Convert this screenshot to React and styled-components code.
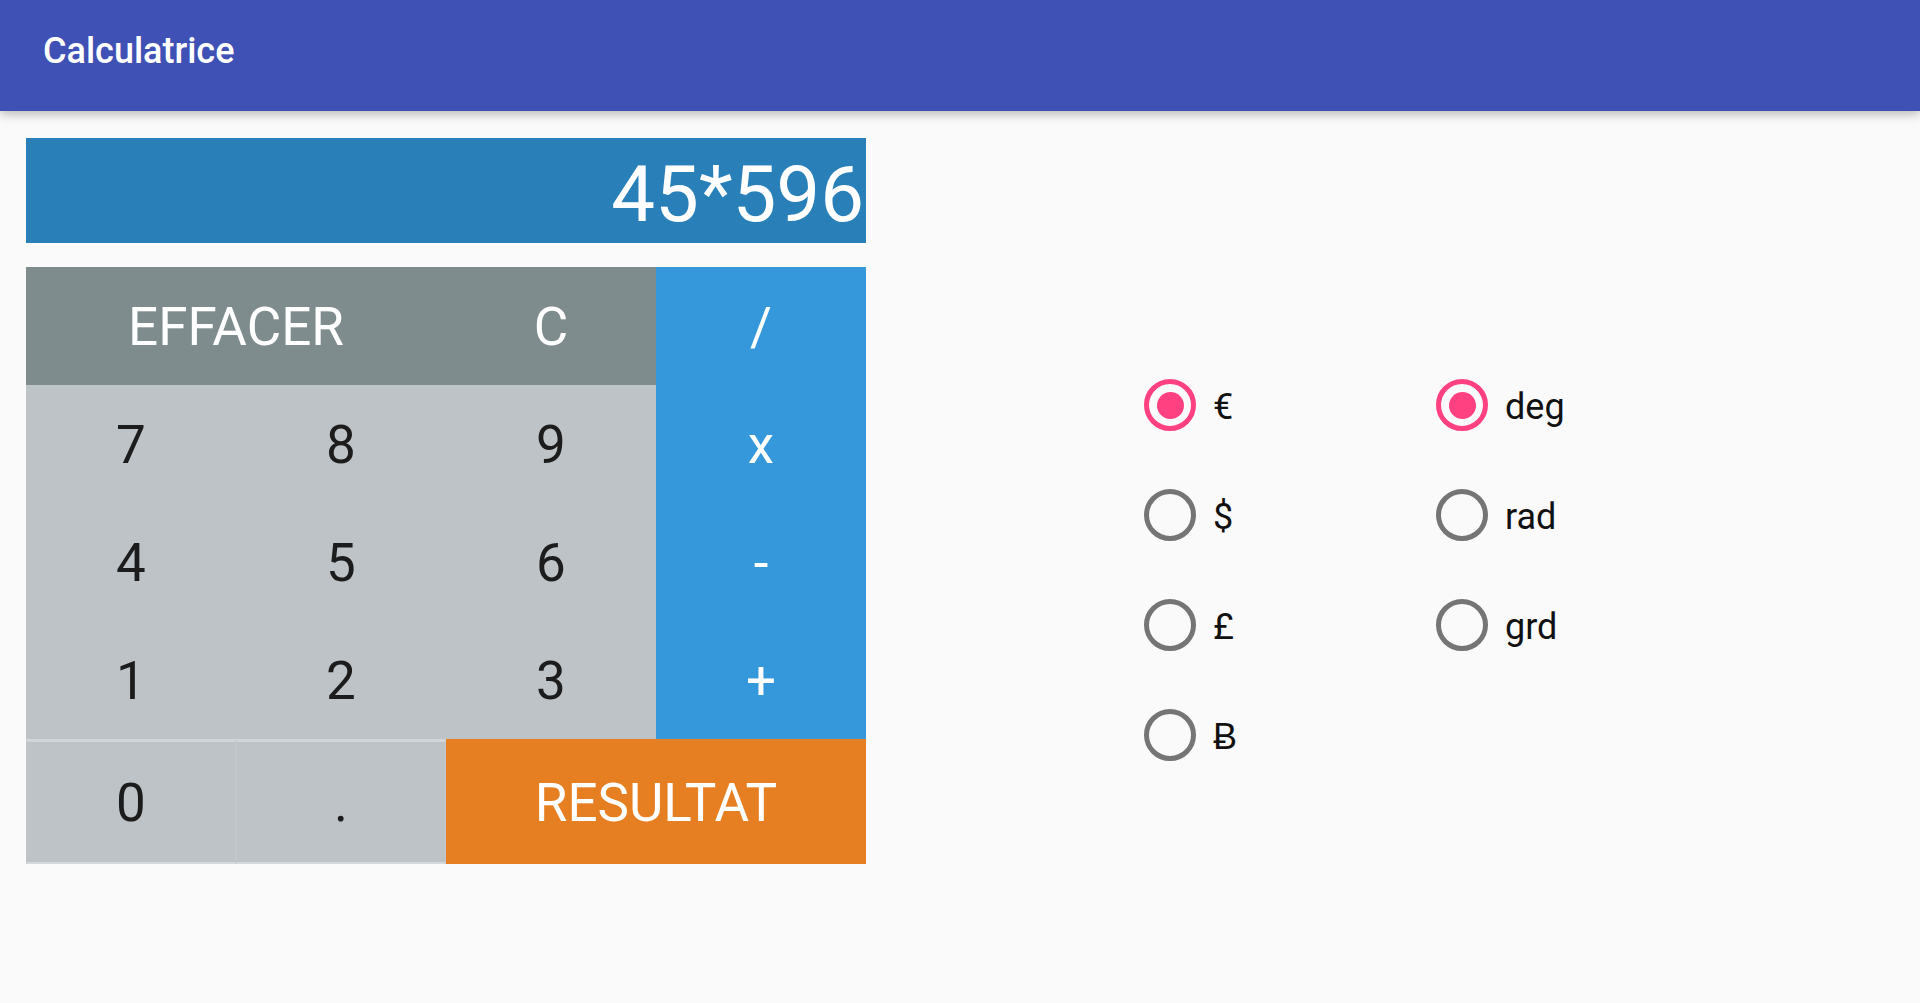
import React from 'react'
import styled, { createGlobalStyle } from 'styled-components'

const GlobalStyle = createGlobalStyle`
  html, body {
    margin: 0;
    padding: 0;
    background: #fafafa;
    font-family: Roboto, 'Liberation Sans', sans-serif;
  }
  * {
    box-sizing: border-box;
  }
`

const Page = styled.div`
  min-height: 1003px;
  background: #fafafa;
`

const AppBar = styled.header`
  position: relative;
  z-index: 2;
  height: 111px;
  background: #3f51b5;
  padding: 33px 0 0 43px;
  box-shadow: 0 3px 10px rgba(0, 0, 0, 0.28);
`

const Title = styled.h1`
  margin: 0;
  font-size: 36px;
  line-height: 1;
  font-weight: 500;
  color: #fff;
`

const Main = styled.main`
  display: flex;
`

const CalcColumn = styled.section`
  width: 840px;
  margin-left: 26px;
  padding-top: 27px;
  display: flex;
  flex-direction: column;
  gap: 24px;
`

const Display = styled.div`
  height: 105px;
  background: #2980b9;
  color: #fff;
  font-size: 78px;
  line-height: 1;
  text-align: right;
  padding: 18px 2px 0 0;
`

const Keypad = styled.div`
  display: grid;
  grid-template-columns: repeat(4, 210px);
  grid-template-rows: repeat(4, 118px) 125px;
`

const tones = {
  dark: { bg: '#7f8c8d', fg: '#fff' },
  light: { bg: '#bdc3c7', fg: '#1c1c1c' },
  op: { bg: '#3498db', fg: '#fff' },
  result: { bg: '#e67e22', fg: '#fff' },
}

const Key = styled.button`
  grid-column: span ${(p) => p.$span || 1};
  border: 0;
  margin: 0;
  padding: 2px 0 0;
  font-family: inherit;
  font-size: 53px;
  font-weight: 400;
  background: ${(p) => tones[p.$tone].bg};
  color: ${(p) => tones[p.$tone].fg};
  display: flex;
  align-items: center;
  justify-content: center;
  cursor: pointer;

  ${(p) =>
    p.$raised &&
    `
    border-top: 3px solid #d2d6d8;
    border-bottom: 2px solid #d6d9db;
    border-left: 1px solid #c2c7ca;
    border-right: 1px solid #c2c7ca;
  `}
`

const RadioPanel = styled.section`
  display: flex;
  padding: 239px 0 0 278px;
`

const RadioGroup = styled.div`
  width: 292px;
  display: flex;
  flex-direction: column;
`

const RadioRow = styled.label`
  height: 110px;
  display: flex;
  align-items: center;
  gap: 17px;
  font-size: 36px;
  color: #111;
`

const RadioText = styled.span`
  padding-top: 4px;
`

const RadioMark = styled.span`
  position: relative;
  width: 52px;
  height: 52px;
  border-radius: 50%;
  border: 5px solid ${(p) => (p.$checked ? '#ff4081' : '#757575')};
  flex-shrink: 0;

  &::after {
    content: '';
    display: ${(p) => (p.$checked ? 'block' : 'none')};
    position: absolute;
    left: 50%;
    top: 50%;
    width: 27px;
    height: 27px;
    margin: -13.5px 0 0 -13.5px;
    border-radius: 50%;
    background: #ff4081;
  }
`

const keys = [
  { label: 'EFFACER', tone: 'dark', span: 2 },
  { label: 'C', tone: 'dark' },
  { label: '/', tone: 'op' },
  { label: '7', tone: 'light' },
  { label: '8', tone: 'light' },
  { label: '9', tone: 'light' },
  { label: 'x', tone: 'op' },
  { label: '4', tone: 'light' },
  { label: '5', tone: 'light' },
  { label: '6', tone: 'light' },
  { label: '-', tone: 'op' },
  { label: '1', tone: 'light' },
  { label: '2', tone: 'light' },
  { label: '3', tone: 'light' },
  { label: '+', tone: 'op' },
  { label: '0', tone: 'light', raised: true },
  { label: '.', tone: 'light', raised: true },
  { label: 'RESULTAT', tone: 'result', span: 2 },
]

const currencies = [
  { label: '€', checked: true },
  { label: '$' },
  { label: '£' },
  { label: 'Ƀ' },
]

const angles = [{ label: 'deg', checked: true }, { label: 'rad' }, { label: 'grd' }]

const Radios = ({ items }) => (
  <RadioGroup>
    {items.map((it) => (
      <RadioRow key={it.label}>
        <RadioMark $checked={it.checked} />
        <RadioText>{it.label}</RadioText>
      </RadioRow>
    ))}
  </RadioGroup>
)

const App = () => (
  <Page>
    <GlobalStyle />
    <AppBar>
      <Title>Calculatrice</Title>
    </AppBar>
    <Main>
      <CalcColumn>
        <Display>45*596</Display>
        <Keypad>
          {keys.map((k) => (
            <Key key={k.label} $tone={k.tone} $span={k.span} $raised={k.raised}>
              {k.label}
            </Key>
          ))}
        </Keypad>
      </CalcColumn>
      <RadioPanel>
        <Radios items={currencies} />
        <Radios items={angles} />
      </RadioPanel>
    </Main>
  </Page>
)

export default App
